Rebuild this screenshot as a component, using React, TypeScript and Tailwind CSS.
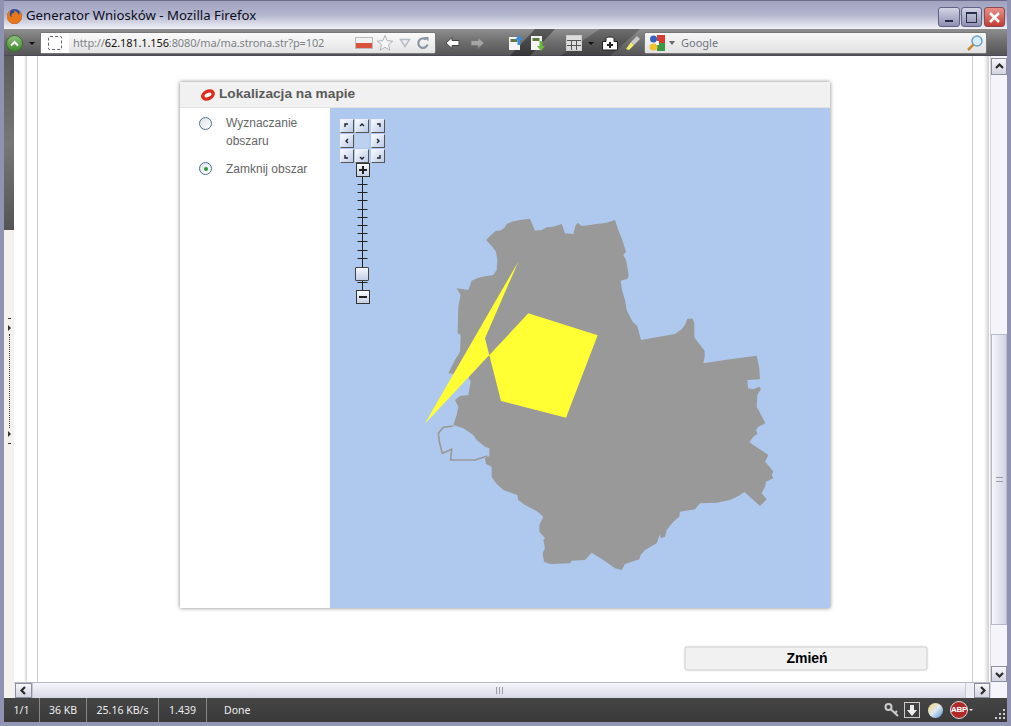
import React from 'react';

const mapOutline = "228,90 240,78 258,62 270,62 285,52 290,42 305,35 330,30 360,26 368,45 375,62 395,60 410,52 430,50 455,42 465,70 490,72 497,45 503,38 515,48 545,44 560,42 590,38 615,30 625,60 635,85 640,100 648,125 640,135 648,150 652,170 656,200 650,207 632,212 636,240 645,270 650,300 660,320 668,335 682,348 693,390 740,382 795,372 815,358 825,345 832,326 848,326 853,340 853,382 870,405 884,422 884,440 880,460 960,448 1040,437 1048,475 1050,508 1012,510 1014,535 1030,538 1048,530 1053,537 1042,555 1040,590 1055,618 1066,640 1045,650 1038,660 1042,672 1030,680 1018,697 1045,715 1075,735 1065,755 1080,772 1090,785 1085,795 1090,805 1068,815 1065,830 1055,850 1070,868 1050,888 1030,870 1003,846 985,858 960,870 920,878 870,880 855,898 810,905 808,920 790,935 770,960 765,980 752,985 750,972 740,1000 705,1020 692,1035 688,1048 645,1062 635,1080 615,1075 580,1050 545,1028 525,1050 485,1052 480,1060 420,1062 402,1055 398,1030 405,1015 400,990 405,985 388,965 388,945 400,920 380,903 345,885 325,870 322,855 280,840 258,820 245,800 245,770 228,762 225,745 238,738 238,715 225,710 200,690 190,675 160,655 130,645 140,615 145,590 135,570 150,558 175,555 182,515 172,495 115,490 135,450 150,425 152,375 143,370 145,290 152,255 140,235 175,240 185,212 205,203 230,198 250,195 260,180 262,150 258,125 245,108";
const areaShape = "325,155 225,385 273,573 468,623 563,376 355,310 44,642";

const Chevron = ({ d }: { d: string }) => (
  <svg width="11" height="11" viewBox="0 0 11 11"><path d={d} fill="none" stroke="#2b2b2b" strokeWidth="2.2" /></svg>
);

const ScrollBtn = ({ d, className = '' }: { d: string; className?: string }) => (
  <div className={`flex items-center justify-center border border-[#8d8f9f] bg-gradient-to-b from-[#f6f6fa] to-[#d3d4e2] ${className}`}>
    <Chevron d={d} />
  </div>
);

const PanBtn = ({ d, empty = false }: { d?: string; empty?: boolean }) => (
  <div className={`w-[14px] h-[14px] ${empty ? 'bg-[#bcd0f0]' : 'border border-[#555] border-t-[#eef] border-l-[#eef] bg-gradient-to-br from-[#f8fbff] to-[#bccbe6]'}`}>
    {d && <svg width="12" height="12" viewBox="0 0 12 12"><path d={d} fill="none" stroke="#222" strokeWidth="1.4" /></svg>}
  </div>
);

const Radio = ({ on = false }: { on?: boolean }) => (
  <div className="w-[13px] h-[13px] rounded-full border-[1.5px] border-[#4a6f94] bg-gradient-to-br from-[#dfe2e8] to-white flex items-center justify-center shrink-0">
    {on && <div className="w-[4px] h-[4px] rounded-full bg-[#2c9a3c]" />}
  </div>
);

export default function App() {
  return (
    <div className="w-[1011px] h-[726px] overflow-hidden flex flex-col bg-[#a9abc6] border-x-[4px] border-b-[4px] border-x-[#8f92b0] border-b-[#9396b4] [font-family:'Liberation_Sans',Arial,sans-serif]">
      {/* title bar */}
      <div className="h-[29px] -mx-[4px] shrink-0 flex items-start pl-[6px] pr-[6px] pt-[6px] border-t border-[#6a6c8a] bg-gradient-to-b from-[#a0a2bf] via-[#b4b6cf] to-[#f1f1f6]">
        <svg width="17" height="17" viewBox="0 0 17 17" className="shrink-0 mr-[3px] mt-[1px]">
          <circle cx="8.500" cy="8.500" r="7.500" fill="#2a4f9c" />
          <path d="M5 1.500C1 4 0 9 2 12.500 4.500 16.500 11 17.500 14.500 13 17 9.500 16 5 13.500 3 14 5 13.500 6 12.500 6.500 12 4.500 10 3 8 2.500 9 4 8 5 6.500 5.500 5 6.500 5 8 6 9 4 9 3.500 7 4 5.500 4 4 4.500 2.500 5 1.500Z" fill="#e8761a" />
        </svg>
        <span className="text-[13.2px] leading-[17px] text-[#0a0c20] [font-family:'Noto_Sans',sans-serif]">Generator Wniosków - Mozilla Firefox</span>
        <div className="ml-auto flex gap-[1px]">
          <div className="w-[22px] h-[20px] rounded-[3px] border border-[#5f6285] bg-gradient-to-b from-[#d4d5e4] to-[#8e90b2] flex items-end justify-center pb-[4px]"><div className="w-[8px] h-[2px] bg-[#2a2c4c]" /></div>
          <div className="w-[21px] h-[20px] rounded-[3px] border border-[#5f6285] bg-gradient-to-b from-[#d4d5e4] to-[#8e90b2] flex items-center justify-center"><div className="w-[11px] h-[11px] border border-t-2 border-[#2a2c4c]" /></div>
          <div className="w-[21px] h-[20px] ml-px rounded-[3px] border border-[#8a4a50] bg-gradient-to-b from-[#e89088] to-[#c03c34] flex items-center justify-center">
            <svg width="13" height="13" viewBox="0 0 13 13"><path d="M2 2L11 11M11 2L2 11" stroke="#fff" strokeWidth="2.6" /></svg>
          </div>
        </div>
      </div>

      {/* toolbar */}
      <div className="relative h-[27px] -mx-[4px] px-[4px] pt-[2px] shrink-0 flex items-center bg-gradient-to-b from-[#8f8f8f] via-[#6e6e6e] to-[#565656] border-b border-[#4a4a55]">
        <svg className="absolute inset-0" width="1011" height="27" viewBox="0 0 1011 27">
          <polygon points="560,27 610,27 640,0 600,0" fill="#000" opacity="0.22" />
          <polygon points="510,27 530,27 555,0 535,0" fill="#000" opacity="0.35" />
        </svg>
        <div className="relative w-[36px] flex items-center pl-[2px]">
          <div className="w-[17px] h-[17px] rounded-full bg-gradient-to-b from-[#8cc07a] to-[#3f8a2e] border border-[#3d6b35] flex items-center justify-center">
            <svg width="9" height="7" viewBox="0 0 9 7"><path d="M1 5.500L4.500 2 8 5.500" fill="none" stroke="#fff" strokeWidth="2" /></svg>
          </div>
          <div className="ml-[6px] w-0 h-0 border-x-[3px] border-x-transparent border-t-[3px] border-t-[#111]" />
        </div>
        <div className="relative w-[396px] h-[22px] flex items-center rounded-[2px] border border-[#777] bg-gradient-to-b from-[#fafafa] to-[#e4e4e4]">
          <div className="w-[28px] h-full flex items-center justify-center bg-white">
            <div className="w-[14px] h-[14px] rounded-[2px] border border-dashed border-[#666]" />
          </div>
          <span className="ml-[4px] pt-[1px] text-[11px] tracking-[-0.12px] text-[#7d8288] [font-family:'Noto_Sans',sans-serif]">http://<span className="text-[#111]">62.181.1.156</span>:8080/ma/ma.strona.str?p=102</span>
          <div className="ml-auto mr-[5px] flex items-center gap-[3px]">
            <div className="w-[18px] h-[12px] flex flex-col border border-[#bbb]"><div className="flex-1 bg-[#f2f2f2]" /><div className="flex-1 bg-[#d9533f]" /></div>
            <svg width="18" height="18" viewBox="0 0 18 18"><path d="M9 1.500L11.200 6.700 16.800 7.100 12.500 10.700 13.900 16.200 9 13.300 4.100 16.200 5.500 10.700 1.200 7.100 6.800 6.700Z" fill="#f6f6f6" stroke="#b0b4ba" /></svg>
            <svg width="12" height="10" viewBox="0 0 12 10" className="ml-[2px]"><path d="M1.500 1.500H10.500L6 8.500Z" fill="none" stroke="#b4bcc6" strokeWidth="1.500" /></svg>
            <svg width="14" height="14" viewBox="0 0 14 14" className="ml-[2px]"><path d="M11.500 8.500A4.700 4.700 0 1 1 10 3.500" fill="none" stroke="#8a95a5" strokeWidth="2.200" /><path d="M8 1H12.500V5.500Z" fill="#8a95a5" /></svg>
          </div>
        </div>
        <div className="relative flex items-center ml-[8px] w-[201px] shrink-0">
          <svg width="16" height="14" viewBox="0 0 16 14" className="ml-[1px]"><path d="M1 7L7 1.500V4.500H14V9.500H7V12.500Z" fill="#fff" stroke="#444" /></svg>
          <svg width="16" height="14" viewBox="0 0 16 14" className="ml-[8px]"><path d="M15 7L9 1.500V4.500H2V9.500H9V12.500Z" fill="#a5a5a5" stroke="#777" /></svg>
          <svg width="16" height="18" viewBox="0 0 16 18" className="ml-[23px]"><rect x="1" y="3" width="11" height="13" fill="#f4f4f4" /><rect x="2.500" y="5" width="7" height="3" fill="#5d7a3c" /><path d="M11 1L15 6H12.500V11H9.500V6H7Z" fill="#3d8bd8" /></svg>
          <svg width="16" height="18" viewBox="0 0 16 18" className="ml-[6px]"><rect x="1" y="2" width="11" height="14" fill="#f4f4f4" /><rect x="2.500" y="4" width="7" height="3" fill="#5d7a3c" /><path d="M11 17L15 12H12.500V7H9.500V12H7Z" fill="#6cb83c" /></svg>
          <div className="ml-[20px] w-[16px] h-[16px] grid grid-cols-3 grid-rows-3 gap-[1px] bg-[#555] border border-[#ccc]">
            <div className="col-span-3 bg-[#ddd]" /><div className="bg-[#ddd]" /><div className="bg-[#ddd]" /><div className="bg-[#ddd]" /><div className="bg-[#ddd]" /><div className="bg-[#ddd]" /><div className="bg-[#ddd]" />
          </div>
          <div className="ml-[6px] w-0 h-0 border-x-[3px] border-x-transparent border-t-[3px] border-t-[#111]" />
          <svg width="18" height="16" viewBox="0 0 18 16" className="ml-[7px]"><path d="M1.500 6.500H5V3.500C5 1.500 13 1.500 13 3.500V6.500H16.500V15H1.500Z" fill="#fff" stroke="#222" /><path d="M9 7V13M6 10H12" stroke="#222" strokeWidth="2" /></svg>
          <svg width="16" height="16" viewBox="0 0 16 16" className="ml-[6px]"><path d="M1 14L6 7 9 10 4 15Z" fill="#f5ee70" /><path d="M6 7L12 1 15 4 9 10Z" fill="#c9c9c9" /></svg>
        </div>
        <div className="relative w-[343px] h-[22px] flex items-center rounded-[2px] border border-[#777] bg-gradient-to-b from-[#f7f7f7] to-[#e2e2e2] -ml-px">
          <svg width="16" height="16" viewBox="0 0 16 16" className="ml-[4px]"><rect x="8" y="0" width="8" height="8" fill="#d93c30" /><rect x="8" y="8" width="8" height="8" fill="#3b9a45" /><circle cx="4.500" cy="4" r="3.500" fill="#2f62c4" /><ellipse cx="4.500" cy="12" rx="4" ry="3.500" fill="#f2c230" /><rect x="7" y="6" width="3" height="4" fill="#fff" /></svg>
          <div className="ml-[4px] w-0 h-0 border-x-[3px] border-x-transparent border-t-[4px] border-t-[#666]" />
          <span className="ml-[6px] pt-[1px] text-[11px] text-[#6f7580] [font-family:'Noto_Sans',sans-serif]">Google</span>
          <svg width="18" height="18" viewBox="0 0 18 18" className="ml-auto mr-[2px]"><circle cx="11" cy="7" r="5" fill="#d8ecf8" stroke="#6aa0cc" strokeWidth="1.500" /><path d="M7.500 10.500L2 16" stroke="#c88a3a" strokeWidth="2.500" /></svg>
        </div>
      </div>

      {/* middle: side strip + page + scrollbars */}
      <div className="flex-1 min-h-0 flex bg-white">
        <div className="w-[10px] shrink-0 flex flex-col bg-[#f5f1ef]">
          <div className="h-[174px] bg-gradient-to-b from-[#5c5c5c] via-[#777] to-[#555]" />
          <div className="mt-[88px] flex flex-col items-center">
            <div className="w-[3px] h-px bg-[#333] mb-[6px]" />
            <div className="w-0 h-0 border-y-[3px] border-y-transparent border-l-[3px] border-l-[#333] mb-[3px]" />
            <div className="h-[94px] border-l border-dotted border-[#333]" />
            <div className="w-0 h-0 border-y-[3px] border-y-transparent border-l-[3px] border-l-[#333] mt-[3px] mb-[6px]" />
            <div className="w-[3px] h-px bg-[#333]" />
          </div>
        </div>
        <div className="flex-1 min-w-0 flex flex-col">
          <div className="flex-1 min-h-0 flex">
            <div className="w-[10px] bg-white" />
            <div className="w-[3px] bg-gradient-to-r from-white to-[#cfcfcf]" />
            <div className="w-[10px] bg-white" />
            <div className="w-[936px] border-x border-[#cdcdcd] bg-white">
              {/* map card */}
              <div className="ml-[142px] mt-[26px] w-[650px] h-[526px] flex flex-col shadow-[0_0_4px_rgba(0,0,0,0.5)]">
                <div className="h-[26px] shrink-0 flex items-center pl-[20px] bg-[#f1f1f1] border-b border-[#e2e2e2]">
                  <svg width="16" height="14" viewBox="0 0 16 14" className="mr-[3px]"><ellipse cx="8" cy="7" rx="5.500" ry="3.600" transform="rotate(-25 8 7)" fill="#fff" stroke="#e22b20" strokeWidth="3.500" /></svg>
                  <span className="text-[13.7px] font-bold text-[#5a5a5a]">Lokalizacja na mapie</span>
                </div>
                <div className="flex-1 min-h-0 flex">
                  <div className="w-[150px] shrink-0 bg-white pl-[19px] pt-[6px] text-[12px] leading-[18px] text-[#666]">
                    <div className="flex gap-[14px]">
                      <div className="pt-[3px]"><Radio /></div>
                      <div className="w-[90px]">Wyznaczanie obszaru</div>
                    </div>
                    <div className="flex gap-[14px] mt-[10px]">
                      <div className="pt-[2px]"><Radio on /></div>
                      <div>Zamknij obszar</div>
                    </div>
                  </div>
                  <div className="relative flex-1 bg-[#afc8ee]">
                    {/* map layer, viewBox is 3x page pixels */}
                    <svg className="absolute left-[80px] top-[102px]" width="380" height="370" viewBox="0 0 1140 1110">
                      <polygon points={mapOutline} fill="#999999" />
                      <polyline points="130,648 100,652 85,670 88,695 97,730 125,718 122,750 195,750 232,738" fill="none" stroke="#999999" strokeWidth="5" />
                      <polygon points={areaShape} fill="#ffff33" />
                    </svg>
                    {/* pan control */}
                    <div className="absolute left-[10px] top-[11px] w-[45px] grid grid-cols-3 gap-px">
                      <PanBtn d="M7 4H4V7" /><PanBtn d="M4 6L6 4 8 6" /><PanBtn d="M5 4H8V7" />
                      <PanBtn d="M7 4L5 6 7 8" /><PanBtn empty /><PanBtn d="M5 4L7 6 5 8" />
                      <PanBtn d="M4 5V8H7" /><PanBtn d="M4 7L6 9 8 7" /><PanBtn d="M8 5V8H5" />
                    </div>
                    {/* zoom bar */}
                    <div className="absolute left-[25px] top-[55px] flex flex-col items-center w-[15px]">
                      <div className="w-[14px] h-[14px] border border-[#333] bg-gradient-to-b from-[#fafcff] to-[#c4d0e4] flex items-center justify-center">
                        <svg width="10" height="10" viewBox="0 0 10 10"><path d="M5 1V9M1 5H9" stroke="#222" strokeWidth="2" /></svg>
                      </div>
                      <div className="relative w-[15px] h-[113px]">
                        <svg width="15" height="113" viewBox="0 0 15 113"><path d="M7.500 0V113M2.500 7.500H12.500M2.500 15.500H12.500M2.500 23.500H12.500M2.500 32.500H12.500M2.500 40.500H12.500M2.500 48.500H12.500M2.500 56.500H12.500M2.500 64.500H12.500M2.500 73.500H12.500M2.500 81.500H12.500M2.500 105.500H12.500" stroke="#222" /></svg>
                        <div className="absolute left-0 top-[90px] w-[14px] h-[14px] border border-[#444] rounded-[1px] bg-gradient-to-b from-[#f4f7fb] to-[#c4d0e4]" />
                      </div>
                      <div className="w-[14px] h-[14px] border border-[#333] bg-gradient-to-b from-[#fafcff] to-[#c4d0e4] flex items-center justify-center">
                        <div className="w-[8px] h-[2px] bg-[#222]" />
                      </div>
                    </div>
                  </div>
                </div>
              </div>
              <div className="ml-[647px] mt-[39px] pl-[2px] w-[242px] h-[23px] flex items-center justify-center rounded-[2px] bg-[#f1f1f1] border border-[#e0e0e0] shadow-[0_0_2px_rgba(0,0,0,0.45)] text-[14px] font-bold text-black">Zmień</div>
            </div>
            <div className="w-[11px] bg-white" />
            <div className="w-[5px] bg-gradient-to-r from-white to-[#cfcfcf]" />
          </div>
          {/* horizontal scrollbar */}
          <div className="h-[16px] shrink-0 flex bg-[#eeeff6] border-t border-[#b9b9c6]">
            <ScrollBtn d="M7 2L3.500 5.500 7 9" className="w-[17px] ml-px" />
            <div className="w-[934px] bg-gradient-to-b from-[#f5f5fa] to-[#d8d9e6] border-x border-[#c5c6d2] flex items-center justify-center">
              <div className="w-[7px] h-[7px] border-x border-[#9a9aa8]"><div className="mx-auto w-px h-full bg-[#9a9aa8]" /></div>
            </div>
            <div className="flex-1" />
            <ScrollBtn d="M4 2L7.500 5.500 4 9" className="w-[16px]" />
          </div>
        </div>
        {/* vertical scrollbar */}
        <div className="w-[17px] shrink-0 flex flex-col bg-[#f4f4fa] border-l border-[#d5d5de]">
          <ScrollBtn d="M2 7L5.500 3.500 9 7" className="h-[17px] mt-[2px]" />
          <div className="mt-[259px] h-[291px] bg-gradient-to-r from-[#f6f6fb] to-[#d2d3e2] border border-[#b8b9c8] flex items-center justify-center">
            <div className="w-[7px] h-[5px] border-y border-[#9a9aa8]" />
          </div>
          <div className="flex-1" />
          <ScrollBtn d="M2 4L5.500 7.500 9 4" className="h-[16px] mb-[16px]" />
        </div>
      </div>

      {/* status bar */}
      <div className="h-[24px] shrink-0 flex items-center bg-gradient-to-b from-[#454545] to-[#3a3a3a] text-[10.5px] text-[#eee] [font-family:'Noto_Sans',sans-serif]">
        <div className="w-[36px] h-full pt-[2px] flex items-center justify-center border-r border-[#888]">1/1</div>
        <div className="w-[47px] h-full pt-[2px] flex items-center justify-center border-r border-[#888]">36 KB</div>
        <div className="w-[72px] h-full pt-[2px] flex items-center justify-center border-r border-[#888]">25.16 KB/s</div>
        <div className="w-[48px] h-full pt-[2px] flex items-center justify-center border-r border-[#888]">1.439</div>
        <div className="pl-[17px] pt-[2px]">Done</div>
        <div className="ml-auto flex items-center">
          <svg width="16" height="16" viewBox="0 0 16 16"><circle cx="4.500" cy="5" r="3" fill="none" stroke="#ccc" strokeWidth="2" /><path d="M6.500 7L14 14M11 11L13 9" stroke="#ccc" strokeWidth="2" /></svg>
          <div className="ml-[4px] w-[16px] h-[16px] border border-[#ccc] flex items-center justify-center">
            <svg width="10" height="11" viewBox="0 0 10 11"><path d="M3 0H7V5H10L5 11 0 5H3Z" fill="#eee" /></svg>
          </div>
          <div className="ml-[8px] w-[15px] h-[15px] rounded-full bg-gradient-to-br from-[#f4d060] via-[#e0e8f0] to-[#4a90d0]" />
          <div className="ml-[7px] w-[18px] h-[18px] rounded-full bg-[#b02a2a] border border-[#ddd] flex items-center justify-center text-[8px] tracking-[-0.3px] font-bold text-white [font-family:'Liberation_Sans',sans-serif]">ABP</div>
          <div className="ml-px w-0 h-0 border-x-[2px] border-x-transparent border-t-[2px] border-t-[#eee]" />
          <svg width="14" height="14" viewBox="0 0 14 14" className="ml-[20px] mt-[8px]"><path d="M10 2h2v2h-2zM6 6h2v2H6zM10 6h2v2h-2zM2 10h2v2H2zM6 10h2v2H6zM10 10h2v2h-2z" fill="#ccc" /></svg>
        </div>
      </div>
    </div>
  );
}
